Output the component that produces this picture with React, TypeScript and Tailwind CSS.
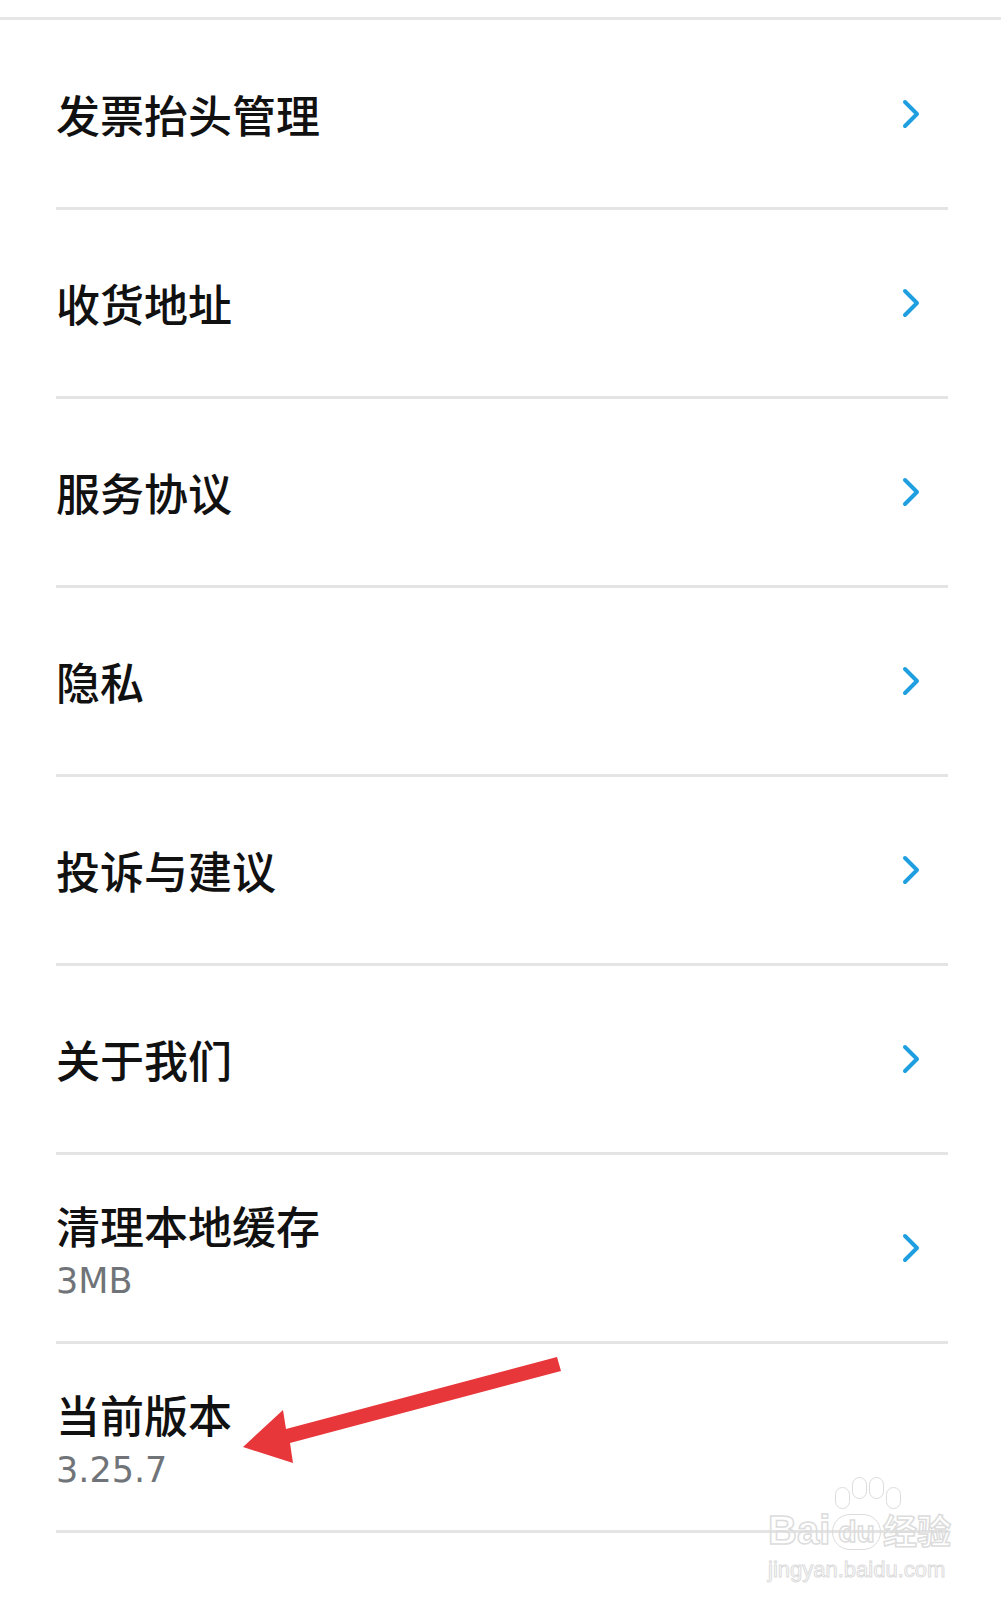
import React from 'react'

type Item = { title: string; sub?: string; chevron: boolean }

const ITEMS: Item[] = [
  { title: '发票抬头管理', chevron: true },
  { title: '收货地址', chevron: true },
  { title: '服务协议', chevron: true },
  { title: '隐私', chevron: true },
  { title: '投诉与建议', chevron: true },
  { title: '关于我们', chevron: true },
  { title: '清理本地缓存', sub: '3MB', chevron: true },
  { title: '当前版本', sub: '3.25.7', chevron: false }
]

function Chevron() {
  return (
    <svg width="20" height="32" viewBox="0 0 20 32" fill="none">
      <polyline
        points="4,4 16,16 4,28"
        stroke="#1f9fdf"
        strokeWidth="4"
        strokeLinecap="round"
        strokeLinejoin="round"
      />
    </svg>
  )
}

function Row({ item, first }: { item: Item; first: boolean }) {
  return (
    <>
      <div className={`flex items-center justify-between ${first ? 'h-[187px]' : 'h-[186px]'}`}>
        <div className={`flex flex-col ${item.sub ? 'pt-[10px]' : ''}`}>
          <span className="text-[44px] leading-[52px] font-medium text-[#111] [font-family:'Noto_Sans_CJK_SC',sans-serif]">
            {item.title}
          </span>
          {item.sub && (
            <span className="mt-[4px] text-[35px] leading-[52px] text-[#707478] [font-family:'DejaVu_Sans','Noto_Sans_CJK_SC',sans-serif]">
              {item.sub}
            </span>
          )}
        </div>
        {item.chevron && (
          <div className="mr-[27px]">
            <Chevron />
          </div>
        )}
      </div>
      <div className="h-[3px] bg-[#e4e4e4]" />
    </>
  )
}

export default function App() {
  return (
    <div className="relative h-[1600px] w-[1001px] overflow-hidden bg-white">
      <div className="pt-[17px]">
        <div className="h-[3px] bg-[#e6e6e6]" />
      </div>
      <div className="ml-[56px] mr-[53px]">
        {ITEMS.map((it, i) => (
          <Row key={it.title} item={it} first={i === 0} />
        ))}
      </div>

      {/* red annotation arrow */}
      <svg className="absolute left-0 top-0" width="1001" height="1600" viewBox="0 0 1001 1600">
        <polygon
          points="557,1357 561,1371 290,1443 293,1463 243,1447 283,1410 286,1429"
          fill="#e8373a"
        />
      </svg>

      {/* watermark */}
      <div className="absolute left-[768px] top-[1510px] flex flex-col items-start">
        <div className="flex items-end text-[40px] leading-[40px] font-bold text-transparent [-webkit-text-stroke:1.5px_#dcdcdc] [font-family:'Liberation_Sans',sans-serif]">
          <span>Bai</span>
          <span className="relative mx-[2px] rounded-full border-[1.5px] border-[#dcdcdc] px-[5px] text-[30px] leading-[34px]">
            du
            <span className="absolute -top-[38px] left-[2px] flex gap-[2px]">
              <span className="mt-[10px] h-[22px] w-[15px] rounded-full border-[1.5px] border-[#dcdcdc]" />
              <span className="h-[22px] w-[15px] rounded-full border-[1.5px] border-[#dcdcdc]" />
              <span className="h-[22px] w-[15px] rounded-full border-[1.5px] border-[#dcdcdc]" />
              <span className="mt-[10px] h-[22px] w-[15px] rounded-full border-[1.5px] border-[#dcdcdc]" />
            </span>
          </span>
          <span className="text-[34px] [font-family:'Noto_Sans_CJK_SC',sans-serif]">经验</span>
        </div>
        <div className="mt-[8px] text-[22px] leading-[24px] text-transparent [-webkit-text-stroke:1px_#dcdcdc] [font-family:'Liberation_Sans',sans-serif]">
          jingyan.baidu.com
        </div>
      </div>
    </div>
  )
}
